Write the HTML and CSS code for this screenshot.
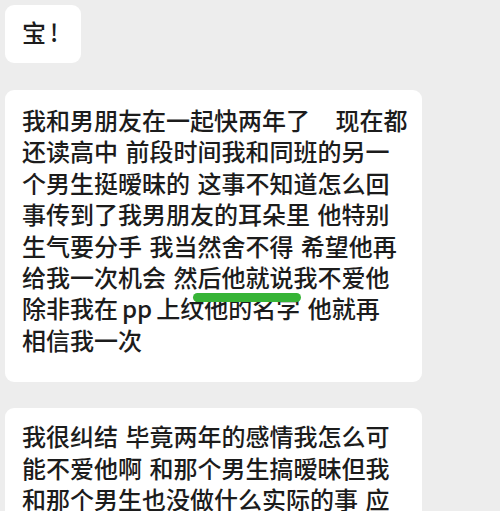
FILE: index.html
```html
<!DOCTYPE html>
<html lang="zh">
<head>
<meta charset="utf-8">
<link rel="stylesheet" href="styles.css">
</head>
<body>
<div class="chat">
  <div class="bubble short">宝!</div>
  <div class="bubble long">
    我和男朋友在一起快两年了<span class="wide"></span> 现在都<br>还读高中 前段时间我和同班的另一<br>个男生挺暧昧的 这事不知道怎么回<br>事传到了我男朋友的耳朵里 他特别<br>生气要分手 我当然舍不得 希望他再<br>给我一次机会 然后他就说我不爱他<br>除非我在<span class="latin">pp</span>上纹他的名字 他就再<br>相信我一次
    <span class="mark"></span>
  </div>
  <div class="bubble long last">
    我很纠结 毕竟两年的感情我怎么可<br>能不爱他啊 和那个男生搞暧昧但我<br>和那个男生也没做什么实际的事 应<br>该怎么办
  </div>
</div>
</body>
</html>
```

FILE: styles.css
```css
html, body {
  margin: 0;
  padding: 0;
  background: #ededed;
  height: 100%;
  overflow: hidden;
}

.chat {
  display: flex;
  flex-direction: column;
  align-items: flex-start;
  padding: 5px 0 0 5px;
  font-family: "Noto Sans CJK SC", "Noto Sans", sans-serif;
  font-weight: 500;
  color: #1c1c1c;
  font-size: 24px;
}

.bubble {
  background: #ffffff;
  border-radius: 9px;
  white-space: nowrap;
  word-spacing: 2px;
}

.short {
  padding: 11px 19px 15px 17px;
  line-height: 32px;
  letter-spacing: 4px;
}

.long {
  position: relative;
  width: 417px;
  box-sizing: border-box;
  margin-top: 27px;
  padding: 14px 17px 27px 17px;
  line-height: 31.4px;
}

.wide {
  display: inline-block;
  width: 18px;
}

.latin {
  margin: 0 4px;
}

.last {
  margin-top: 26px;
  padding-top: 12px;
}

.mark {
  position: absolute;
  left: 188px;
  top: 203px;
  width: 108px;
  height: 9px;
  border-radius: 5px;
  background: #37b437;
}
```
